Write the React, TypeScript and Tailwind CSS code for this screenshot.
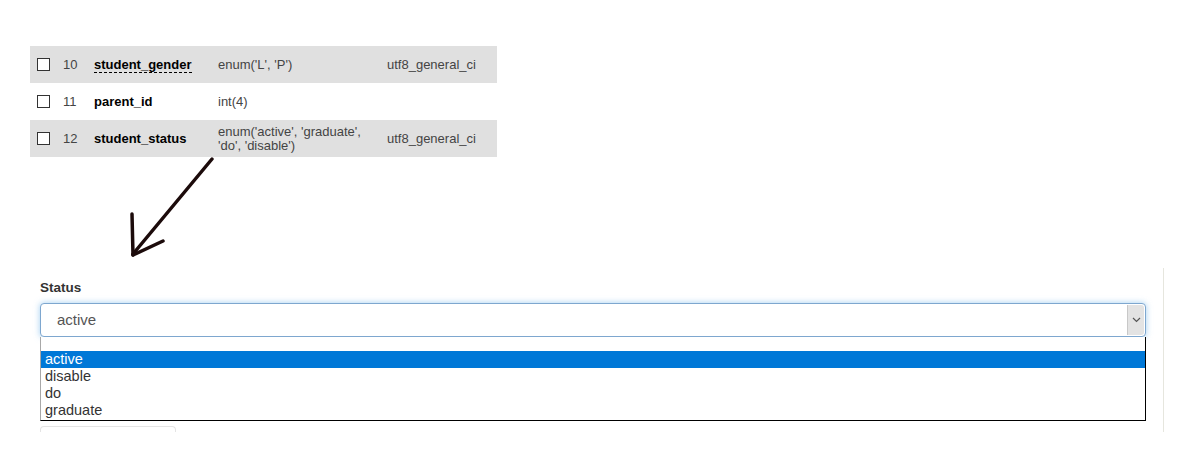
import React from 'react';

type Row = {
  no: number;
  name: string;
  type: string[];
  collation: string;
  shaded: boolean;
  dashed?: boolean;
};

const rows: Row[] = [
  { no: 10, name: 'student_gender', type: ["enum('L', 'P')"], collation: 'utf8_general_ci', shaded: true, dashed: true },
  { no: 11, name: 'parent_id', type: ['int(4)'], collation: '', shaded: false },
  { no: 12, name: 'student_status', type: ["enum('active', 'graduate',", "'do', 'disable')"], collation: 'utf8_general_ci', shaded: true },
];

const options = ['active', 'disable', 'do', 'graduate'];

export default function App() {
  return (
    <main className="min-h-[476px] w-[1188px] overflow-hidden bg-white font-['Liberation_Sans',Arial,sans-serif]">
      <div className="pt-[46px] pl-[30px]">
        <div className="w-[467px]">
          {rows.map((r) => (
            <div
              key={r.no}
              className={`flex h-[37px] items-center pl-[7px] text-[13px] text-[#444] ${r.shaded ? 'bg-[#e0e0e0]' : 'bg-white'}`}
            >
              <div className="w-[26px]">
                <div className="h-[13px] w-[13px] border border-[#333] bg-white" />
              </div>
              <div className="w-[31px]">{r.no}</div>
              <div className="w-[124px]">
                <span
                  className={`font-bold text-black ${r.dashed ? 'border-b border-dashed border-black' : ''}`}
                >
                  {r.name}
                </span>
              </div>
              <div className="w-[169px] leading-[14px]">
                {r.type.map((t) => (
                  <div key={t}>{t}</div>
                ))}
              </div>
              <div>{r.collation}</div>
            </div>
          ))}
        </div>
      </div>

      <svg width="120" height="111" viewBox="0 0 120 111" className="ml-[120px] block">
        <g stroke="#1c0b0b" strokeWidth="3.5" strokeLinecap="round" fill="none">
          <path d="M92 2 L13 97" />
          <path d="M12 57 L13 98" />
          <path d="M13 98 L43 84" />
        </g>
      </svg>

      <div className="ml-[30px] h-[164px] w-[1134px] border-r border-[#e6e6de]">
        <div className="relative pt-[12px] pl-[10px] pr-[17px]">
          <label className="block text-[13.5px] font-bold leading-[16px] text-[#333]">Status</label>
          <div className="mt-[7px] flex h-[34px] items-center rounded-[4px] border border-[#7ea7cf] bg-white pl-[16px] pr-[1px] shadow-[0_0_6px_rgba(102,175,233,0.6)]">
            <span className="flex-1 text-[15px] text-[#555]">active</span>
            <div className="flex h-[30px] w-[17px] items-center justify-center rounded-r-[3px] border-l border-[#c8c8c8] bg-[#e3e3e3]">
              <svg width="9" height="6" viewBox="0 0 9 6">
                <path d="M1 1 L4.5 4.5 L8 1" stroke="#555" strokeWidth="1.2" fill="none" />
              </svg>
            </div>
          </div>

          <div className="mt-[89px] h-[6px] w-[136px] rounded-t-[4px] border-t border-x border-[#e4e4e4]" />

          <div className="absolute left-[10px] right-[17px] top-[69px] h-[84px] border-b border-r border-l border-b-black border-r-black border-l-[#a8a8a8] bg-white text-[14.5px] leading-[17px] text-[#333]">
            <div className="h-[14px]" />
            {options.map((o, i) => (
              <div
                key={o}
                className={`pl-[4px] ${i === 0 ? 'bg-[#0078d7] text-white' : ''}`}
              >
                {o}
              </div>
            ))}
          </div>
        </div>
      </div>
    </main>
  );
}
